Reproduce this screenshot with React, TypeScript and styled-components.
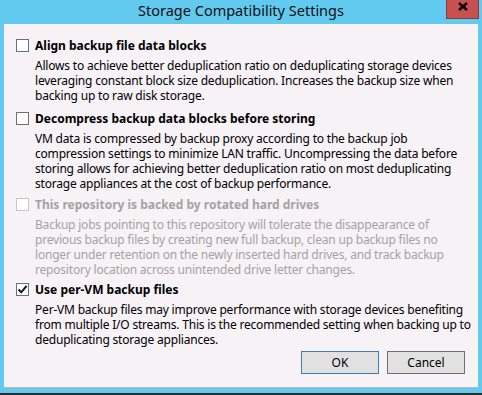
import { Fragment } from "react";
import styled, { createGlobalStyle } from "styled-components";

const GlobalStyle = createGlobalStyle`
    html, body {
        margin: 0;
        padding: 0;
        background: #62c9ef;
    }
    * {
        box-sizing: border-box;
    }
`

const uiFont = `"Noto Sans", "Open Sans", "Liberation Sans", sans-serif`

type OptionData = {
    title: string
    lines: string[]
    checked?: boolean
    disabled?: boolean
    gap: number
}

const options: OptionData[] = [
    {
        title: "Align backup file data blocks",
        lines: [
            "Allows to achieve better deduplication ratio on deduplicating storage devices",
            "leveraging constant block size deduplication. Increases the backup size when",
            "backing up to raw disk storage.",
        ],
        gap: 0,
    },
    {
        title: "Decompress backup data blocks before storing",
        lines: [
            "VM data is compressed by backup proxy according to the backup job",
            "compression settings to minimize LAN traffic. Uncompressing the data before",
            "storing allows for achieving better deduplication ratio on most deduplicating",
            "storage appliances at the cost of backup performance.",
        ],
        gap: 8,
    },
    {
        title: "This repository is backed by rotated hard drives",
        lines: [
            "Backup jobs pointing to this repository will tolerate the disappearance of",
            "previous backup files by creating new full backup, clean up backup files no",
            "longer under retention on the newly inserted hard drives, and track backup",
            "repository location across unintended drive letter changes.",
        ],
        disabled: true,
        gap: 6,
    },
    {
        title: "Use per-VM backup files",
        lines: [
            "Per-VM backup files may improve performance with storage devices benefiting",
            "from multiple I/O streams. This is the recommended setting when backing up to",
            "deduplicating storage appliances.",
        ],
        checked: true,
        gap: 5,
    },
]

const Window = styled.div`
    width: 482px;
    height: 395px;
    background: #62c9ef;
    display: flex;
    flex-direction: column;
    font-family: ${uiFont};
    border-bottom: 2px solid #2c2c2c;
`

const TitleBar = styled.div`
    height: 24px;
    display: grid;
    grid-template-columns: 1fr auto 1fr;
    align-items: start;
`

const Title = styled.div`
    grid-column: 2;
    font-size: 14.5px;
    line-height: 20px;
    color: #111;
`

const CloseButton = styled.div`
    grid-column: 3;
    justify-self: end;
    width: 33px;
    height: 19px;
    margin-right: 3px;
    background: #c75050;
    border: 1px solid #8f3a3a;
    border-top: none;
    display: flex;
    justify-content: center;
    padding-top: 2px;
`

const Panel = styled.div`
    margin: 0 4px;
    height: 364px;
    background: #f6f2f6;
    border-bottom: 1px solid #b9b9b9;
    padding: 14px 13px 0 12px;
    display: flex;
    flex-direction: column;
`

const Option = styled.div<{ $gap: number }>`
    margin-top: ${p => p.$gap}px;
`

const HeadRow = styled.div<{ $disabled?: boolean }>`
    display: flex;
    align-items: center;
    gap: 6px;
    font-weight: 700;
    font-size: 12px;
    line-height: 15px;
    color: ${p => (p.$disabled ? "#a3a3a3" : "#000")};
`

const Box = styled.div<{ $disabled?: boolean }>`
    width: 13px;
    height: 13px;
    flex: none;
    background: #fff;
    border: 1px solid ${p => (p.$disabled ? "#c6c6c6" : "#707070")};
    display: flex;
    align-items: center;
    justify-content: center;
`

const Desc = styled.p<{ $disabled?: boolean }>`
    margin: 5px 0 0;
    padding-left: 19px;
    font-size: 12px;
    line-height: 15px;
    white-space: nowrap;
    letter-spacing: -0.2px;
    color: ${p => (p.$disabled ? "#a3a3a3" : "#000")};
`

const Footer = styled.div`
    margin-top: auto;
    margin-bottom: 13px;
    display: flex;
    justify-content: flex-end;
    gap: 8px;
`

const Button = styled.button<{ $default?: boolean }>`
    width: 78px;
    height: 23px;
    background: #e1e1e1;
    border: 1px solid ${p => (p.$default ? "#3c7fb1" : "#707070")};
    font-family: ${uiFont};
    font-size: 12px;
    color: #000;
    padding: 0;
`

const Check = () => (
    <svg width="11" height="11" viewBox="0 0 11 11">
        <path d="M1.5 5.5 L4.2 8.3 L9.5 2" fill="none" stroke="#1a1a1a" strokeWidth="2" />
    </svg>
)

const CloseGlyph = () => (
    <svg width="10" height="9" viewBox="0 0 10 9">
        <path d="M1 1 L9 8 M9 1 L1 8" stroke="#000" strokeWidth="2.4" />
    </svg>
)

export default function App() {
    return (
        <>
            <GlobalStyle />
            <Window>
                <TitleBar>
                    <Title>Storage Compatibility Settings</Title>
                    <CloseButton>
                        <CloseGlyph />
                    </CloseButton>
                </TitleBar>
                <Panel>
                    {options.map(o => (
                        <Option key={o.title} $gap={o.gap}>
                            <HeadRow $disabled={o.disabled}>
                                <Box $disabled={o.disabled}>{o.checked && <Check />}</Box>
                                <span>{o.title}</span>
                            </HeadRow>
                            <Desc $disabled={o.disabled}>
                                {o.lines.map((l, i) => (
                                    <Fragment key={l}>
                                        {i > 0 && <br />}
                                        {l}
                                    </Fragment>
                                ))}
                            </Desc>
                        </Option>
                    ))}
                    <Footer>
                        <Button $default>OK</Button>
                        <Button>Cancel</Button>
                    </Footer>
                </Panel>
            </Window>
        </>
    )
}
